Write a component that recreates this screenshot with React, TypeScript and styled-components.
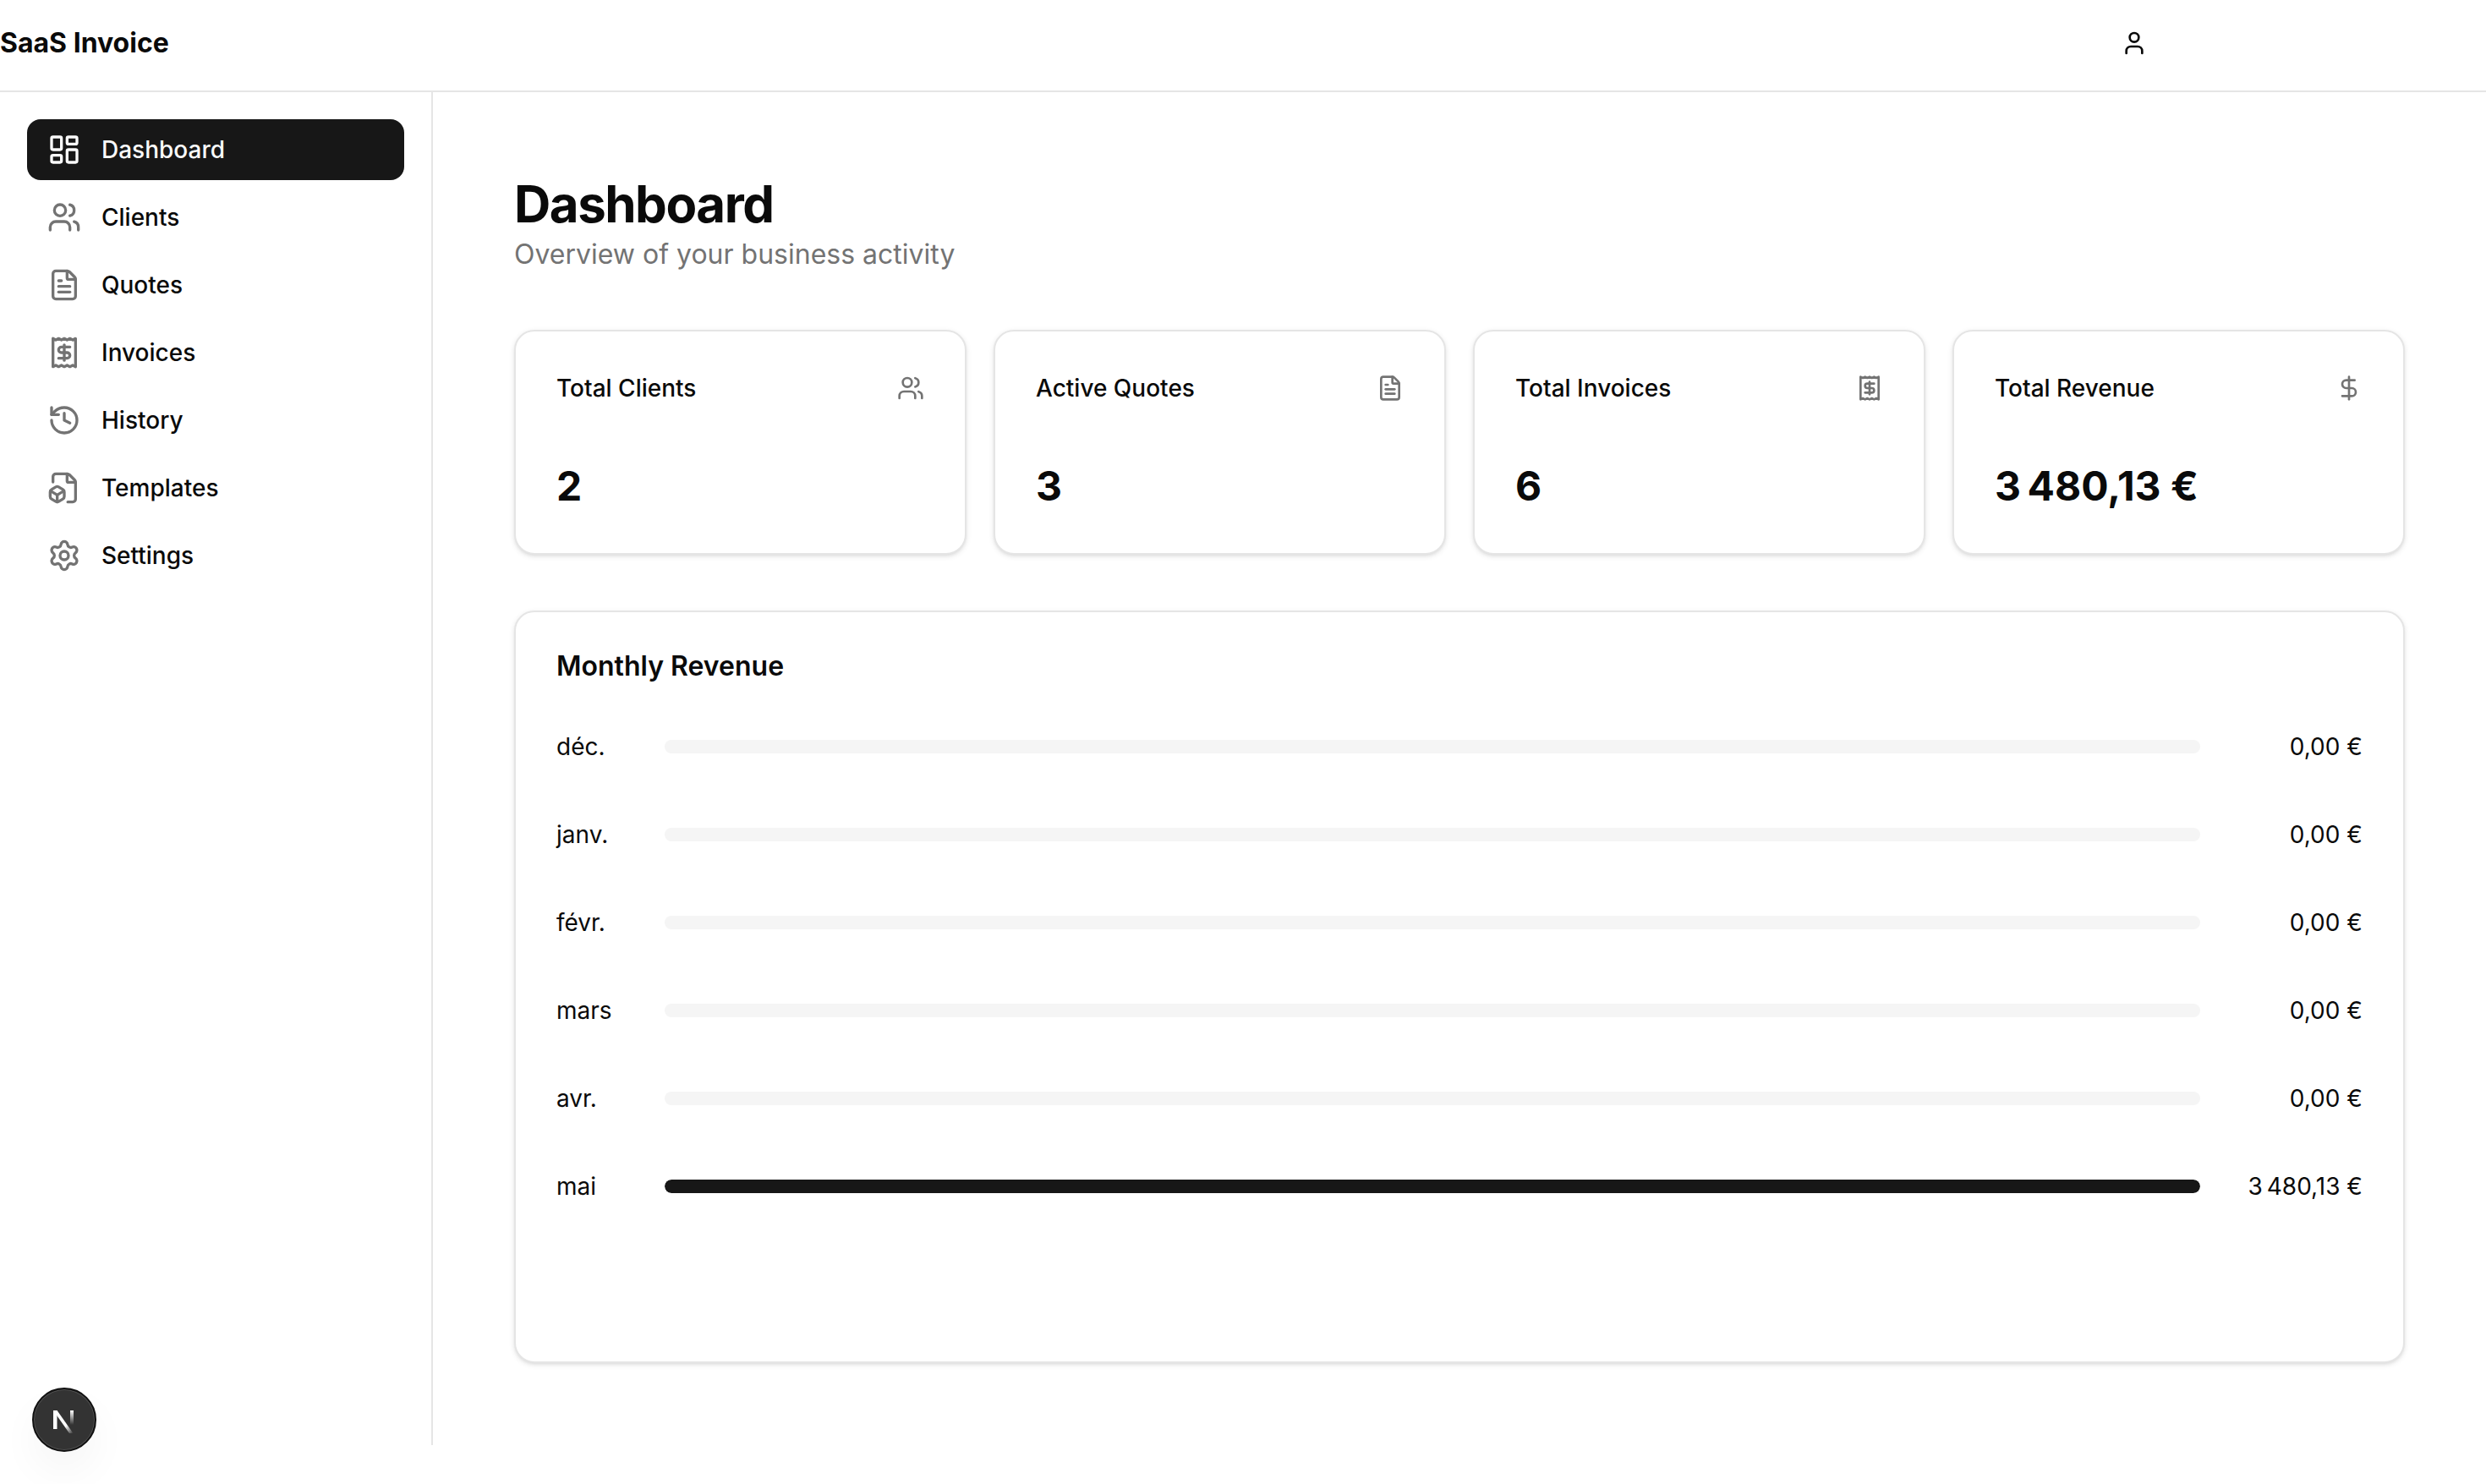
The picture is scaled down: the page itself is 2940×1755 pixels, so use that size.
import styled, { createGlobalStyle } from 'styled-components';
import {
  DollarSign,
  FileBox,
  FileText,
  History,
  LayoutDashboard,
  Receipt,
  Settings,
  User,
  Users,
} from 'lucide-react';

const GlobalStyle = createGlobalStyle`
  html, body {
    margin: 0;
    padding: 0;
    background: #ffffff;
  }
  body {
    font-family: Inter, "Liberation Sans", sans-serif;
    color: #0a0a0a;
  }
  * {
    box-sizing: border-box;
  }
`;

const Page = styled.div`
  position: relative;
  min-height: 1755px;
`;

const Header = styled.header`
  display: flex;
  align-items: center;
  justify-content: space-between;
  height: 109px;
  padding: 0 400px 6px 0;
  border-bottom: 2px solid #e5e5e5;
`;

const Brand = styled.div`
  font-size: 32px;
  font-weight: 700;
`;

const Layout = styled.div`
  display: flex;
  align-items: flex-start;
`;

const Sidebar = styled.aside`
  display: flex;
  flex-direction: column;
  gap: 8px;
  flex: none;
  width: 512px;
  height: 1600px;
  padding: 32px 32px;
  border-right: 2px solid #e5e5e5;
`;

const NavItem = styled.div<{ $active?: boolean }>`
  display: flex;
  align-items: center;
  gap: 24px;
  height: 72px;
  padding: 0 24px;
  border-radius: 16px;
  font-size: 28px;
  font-weight: 500;
  background: ${(p) => (p.$active ? '#171717' : 'transparent')};
  color: ${(p) => (p.$active ? '#fafafa' : '#0a0a0a')};

  svg {
    flex: none;
    color: ${(p) => (p.$active ? '#fafafa' : '#737373')};
  }
`;

const Main = styled.main`
  flex: 1;
  min-width: 0;
  padding: 96px;
`;

const Title = styled.h1`
  margin: 0;
  font-size: 60px;
  line-height: 72px;
  font-weight: 700;
  letter-spacing: -1.5px;
`;

const Subtitle = styled.p`
  margin: 0 0 65px;
  font-size: 32px;
  line-height: 48px;
  color: #737373;
`;

const StatGrid = styled.div`
  display: grid;
  grid-template-columns: repeat(4, 1fr);
  gap: 32px;
  margin-bottom: 66px;
`;

const Card = styled.section`
  background: #ffffff;
  border: 2px solid #e5e5e5;
  border-radius: 24px;
  box-shadow: 0 2px 6px rgba(0, 0, 0, 0.1), 0 2px 4px -2px rgba(0, 0, 0, 0.1);
`;

const StatCard = styled(Card)`
  height: 266px;
  padding: 47px 48px 48px;
`;

const StatHead = styled.div`
  display: flex;
  align-items: center;
  justify-content: space-between;
  height: 40px;
  margin-bottom: 64px;

  svg {
    color: #737373;
  }
`;

const StatLabel = styled.div`
  font-size: 28px;
  font-weight: 500;
`;

const StatValue = styled.div`
  font-size: 48px;
  line-height: 64px;
  font-weight: 700;
`;

const ChartCard = styled(Card)`
  height: 890px;
  padding: 40px 48px 48px;
`;

const ChartTitle = styled.h2`
  margin: 0 0 51px;
  font-size: 32px;
  line-height: 48px;
  font-weight: 600;
`;

const Rows = styled.div`
  display: flex;
  flex-direction: column;
  gap: 64px;
`;

const Row = styled.div`
  display: flex;
  align-items: center;
  height: 40px;
  font-size: 28px;
`;

const Month = styled.div`
  flex: none;
  width: 128px;
`;

const Track = styled.div`
  flex: 1;
  height: 16px;
  border-radius: 8px;
  background: #f5f5f5;
  overflow: hidden;
`;

const Fill = styled.div`
  height: 100%;
  border-radius: 8px;
  background: #171717;
`;

const Amount = styled.div`
  flex: none;
  width: 192px;
  text-align: right;
`;

const DevBadge = styled.div`
  position: absolute;
  left: 38px;
  top: 1641px;
  display: flex;
  align-items: center;
  justify-content: center;
  width: 76px;
  height: 76px;
  border-radius: 50%;
  background: #333333;
  border: 2px solid #111111;
  box-shadow: inset 0 0 0 1px rgba(255, 255, 255, 0.14), 0 24px 48px rgba(0, 0, 0, 0.04);

  svg {
    overflow: visible;
  }
`;

const navItems = [
  { label: 'Dashboard', Icon: LayoutDashboard, active: true },
  { label: 'Clients', Icon: Users },
  { label: 'Quotes', Icon: FileText },
  { label: 'Invoices', Icon: Receipt },
  { label: 'History', Icon: History },
  { label: 'Templates', Icon: FileBox },
  { label: 'Settings', Icon: Settings },
];

const stats = [
  { label: 'Total Clients', value: '2', Icon: Users },
  { label: 'Active Quotes', value: '3', Icon: FileText },
  { label: 'Total Invoices', value: '6', Icon: Receipt },
  { label: 'Total Revenue', value: '3\u202f480,13\u00a0€', Icon: DollarSign },
];

const months = [
  { month: 'déc.', amount: '0,00\u00a0€', pct: 0 },
  { month: 'janv.', amount: '0,00\u00a0€', pct: 0 },
  { month: 'févr.', amount: '0,00\u00a0€', pct: 0 },
  { month: 'mars', amount: '0,00\u00a0€', pct: 0 },
  { month: 'avr.', amount: '0,00\u00a0€', pct: 0 },
  { month: 'mai', amount: '3\u202f480,13\u00a0€', pct: 100 },
];

export default function App() {
  return (
    <Page>
      <GlobalStyle />
      <Header>
        <Brand>SaaS Invoice</Brand>
        <User size={32} color="#0a0a0a" />
      </Header>
      <Layout>
        <Sidebar>
          {navItems.map(({ label, Icon, active }) => (
            <NavItem key={label} $active={active}>
              <Icon size={40} />
              {label}
            </NavItem>
          ))}
        </Sidebar>
        <Main>
          <Title>Dashboard</Title>
          <Subtitle>Overview of your business activity</Subtitle>
          <StatGrid>
            {stats.map(({ label, value, Icon }) => (
              <StatCard key={label}>
                <StatHead>
                  <StatLabel>{label}</StatLabel>
                  <Icon size={32} />
                </StatHead>
                <StatValue>{value}</StatValue>
              </StatCard>
            ))}
          </StatGrid>
          <ChartCard>
            <ChartTitle>Monthly Revenue</ChartTitle>
            <Rows>
              {months.map((m) => (
                <Row key={m.month}>
                  <Month>{m.month}</Month>
                  <Track>
                    <Fill style={{ width: `${m.pct}%` }} />
                  </Track>
                  <Amount>{m.amount}</Amount>
                </Row>
              ))}
            </Rows>
          </ChartCard>
        </Main>
      </Layout>
      <DevBadge>
        <svg width="30" height="30" viewBox="0 0 30 30" fill="none">
          <defs>
            <linearGradient id="nBar" x1="0" y1="0" x2="0" y2="1">
              <stop offset="0" stopColor="#ffffff" />
              <stop offset="1" stopColor="#ffffff" stopOpacity="0" />
            </linearGradient>
            <linearGradient id="nSlash" x1="0" y1="0" x2="1" y2="1">
              <stop offset="0.65" stopColor="#ffffff" />
              <stop offset="1" stopColor="#ffffff" stopOpacity="0" />
            </linearGradient>
          </defs>
          <path d="M2 4h4.5v22H2z" fill="#ffffff" />
          <path d="M2 4h4.5l19 27h-4.5z" fill="url(#nSlash)" />
          <rect x="22" y="4" width="4" height="17" fill="url(#nBar)" />
        </svg>
      </DevBadge>
    </Page>
  );
}
